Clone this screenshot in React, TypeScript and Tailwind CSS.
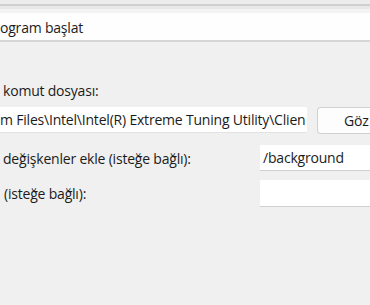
export default function App() {
  return (
    <div
      className="w-[370px] h-[305px] overflow-hidden bg-[#f0f0f0] text-[14px] tracking-[-0.2px] text-[#1b1b1b]"
      style={{ fontFamily: '"Open Sans", "Noto Sans", sans-serif' }}
    >
      {/* top edge of the dialog */}
      <div className="h-[4px] bg-[#ececec]" />
      <div className="h-[2px] bg-[#cfcfcf]" />
      <div className="h-[3px] bg-[#e8e8e8]" />
      <div className="h-[4px] bg-[#f3f3f3]" />

      {/* action field */}
      <div className="h-[29px] bg-[#fefefe] border-b-2 border-[#d6d6d6] flex items-center pt-[2px] whitespace-nowrap">
        ogram başlat
      </div>

      <div className="mt-[39px] h-[20px] leading-[20px] pl-[3px]">komut dosyası:</div>

      <div className="mt-[6px] flex items-start gap-[10px]">
        <div className="w-[307px] shrink-0 h-[26px] bg-white border-b border-[#e2e2e2] flex items-center overflow-hidden whitespace-nowrap">
          m Files\Intel\Intel(R) Extreme Tuning Utility\Clien
        </div>
        <div className="shrink-0 w-[53px] h-[27px] rounded-l-[4px] border border-r-0 border-[#d0d0d0] bg-[#fdfdfd] flex items-center pl-[26px] whitespace-nowrap overflow-hidden">
          Göz
        </div>
      </div>

      <div className="mt-[11px] flex items-center">
        <div className="w-[260px] shrink-0 pl-[3px] whitespace-nowrap">
          değişkenler ekle (isteğe bağlı):
        </div>
        <div className="w-[110px] shrink-0 h-[26px] bg-white border-b border-[#d0d0d0] flex items-center pl-[3px] whitespace-nowrap">
          /background
        </div>
      </div>

      <div className="mt-[9px] flex items-center">
        <div className="w-[260px] shrink-0 pl-[4px] whitespace-nowrap">(isteğe bağlı):</div>
        <div className="w-[110px] shrink-0 h-[27px] bg-white border-b border-[#d0d0d0]" />
      </div>
    </div>
  );
}
